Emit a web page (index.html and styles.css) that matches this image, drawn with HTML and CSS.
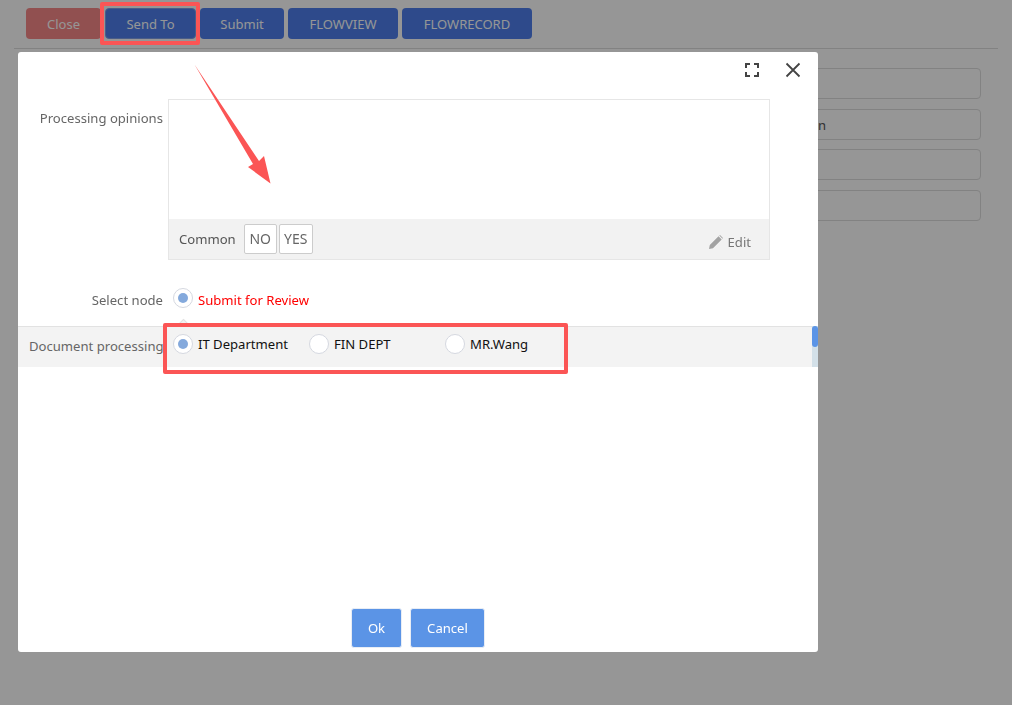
FILE: index.html
```html
<!DOCTYPE html>
<html lang="en">

<head>
    <meta charset="UTF-8">
    <title>Send To</title>
    <link rel="stylesheet" href="styles.css">
</head>

<body>
    <div class="page">
        <div class="toolbar">
            <button class="btn btn-close">Close</button>
            <button class="btn btn-send">Send To</button>
            <button class="btn btn-submit">Submit</button>
            <button class="btn btn-flowview">FLOWVIEW</button>
            <button class="btn btn-record">FLOWRECORD</button>
        </div>
        <div class="fields">
            <div class="field"></div>
            <div class="field field-text">Administration</div>
            <div class="field"></div>
            <div class="field"></div>
        </div>
    </div>

    <div class="mask"></div>

    <div class="modal">
        <div class="modal-head">
            <svg class="icon-max" width="14" height="14" viewBox="0 0 14 14">
                <path d="M1 5V1h4M9 1h4v4M13 9v4H9M5 13H1V9" fill="none" stroke="#444" stroke-width="2" />
            </svg>
            <svg class="icon-x" width="16" height="16" viewBox="0 0 16 16">
                <path d="M1.500 1.500l13 13M14.500 1.500l-13 13" fill="none" stroke="#444" stroke-width="1.800" />
            </svg>
        </div>

        <div class="opinion-row">
            <div class="row-label">Processing opinions</div>
            <div class="editor">
                <div class="editor-text"></div>
                <div class="editor-bar">
                    <span class="common">Common</span>
                    <span class="tag">NO</span>
                    <span class="tag">YES</span>
                    <span class="edit">
                        <svg width="14" height="14" viewBox="0 0 14 14">
                            <path d="M0 14l.8-4L9.500 1.300l3.200 3.200L4 13.200zM10.300.5l.7-.5 3 3-.5.700z" fill="#a3a3a3" />
                        </svg>
                        Edit
                    </span>
                </div>
            </div>
        </div>

        <div class="node-row">
            <div class="row-label">Select node</div>
            <span class="radio radio-on"></span>
            <span class="node-name">Submit for Review</span>
        </div>

        <div class="people-row">
            <div class="people-label">Document processing</div>
            <div class="people-item people-it"><span class="radio radio-on"></span>IT Department</div>
            <div class="people-item people-fin"><span class="radio"></span>FIN DEPT</div>
            <div class="people-item"><span class="radio"></span>MR.Wang</div>
            <div class="scroll"><div class="scroll-thumb"></div></div>
        </div>

        <div class="modal-body"></div>

        <div class="modal-foot">
            <button class="foot-btn foot-ok">Ok</button>
            <button class="foot-btn foot-cancel">Cancel</button>
        </div>
    </div>

    <!-- red marks drawn on top of the screenshot -->
    <div class="mark mark-send"></div>
    <div class="mark mark-people"></div>
    <svg class="arrow" width="1012" height="705" viewBox="0 0 1012 705">
        <polygon points="194.500,64.500 259,161 264,156 270.500,183.500 248,167 253,164" fill="#fb5555" />
    </svg>
</body>

</html>
```

FILE: styles.css
```css
* {
    box-sizing: border-box;
}

body {
    margin: 0;
    width: 1012px;
    height: 705px;
    overflow: hidden;
    background-color: white;
    font-family: "Noto Sans", "Open Sans", Arial, sans-serif;
    font-size: 13.1px;
    color: #666;
}

.page {
    padding: 8px 14px 0 14px;
}

.toolbar {
    display: flex;
    gap: 4px;
    height: 41px;
    padding-left: 12px;
    border-bottom: 1px solid #ddd;
    padding-bottom: 9px;
}

.btn {
    height: 31px;
    border: none;
    border-radius: 4px;
    color: white;
    font: inherit;
    font-size: 13px;
    padding: 0;
    background-color: #4e7fec;
}

.btn-close {
    width: 75px;
    background-color: #f68888;
}

.btn-send {
    width: 91px;
    border: 1px solid #7f9fe8;
}

.btn-submit {
    width: 84px;
}

.btn-flowview {
    width: 110px;
}

.btn-record {
    width: 130px;
}

.fields {
    display: flex;
    flex-direction: column;
    gap: 9.7px;
    margin: 19px 17px 0 500px;
}

.field {
    height: 31px;
    border: 1px solid #ddd;
    border-radius: 4px;
    line-height: 30px;
}

.field-text {
    color: #555;
    padding-left: 220px;
}

.mask {
    position: fixed;
    left: 0;
    top: 0;
    width: 100%;
    height: 100%;
    background-color: rgba(0, 0, 0, 0.41);
}

.modal {
    position: fixed;
    left: 18px;
    top: 52px;
    width: 800px;
    height: 600px;
    display: flex;
    flex-direction: column;
    background-color: white;
    border-radius: 3px;
    overflow: hidden;
}

.modal-head {
    display: flex;
    justify-content: flex-end;
    align-items: center;
    gap: 26px;
    height: 47px;
    padding: 0 17px 11px 0;
}

.opinion-row {
    display: flex;
    height: 161px;
}

.row-label {
    width: 145px;
    text-align: right;
    flex-shrink: 0;
}

.opinion-row .row-label {
    padding-top: 9px;
    line-height: 20px;
}

.editor {
    display: flex;
    flex-direction: column;
    width: 602px;
    margin-left: 5px;
    border: 1px solid #e6e6e6;
}

.editor-text {
    flex: 1;
}

.editor-bar {
    display: flex;
    align-items: center;
    height: 40px;
    padding: 0 18px 0 10px;
    background-color: #f2f2f2;
    color: #555;
}

.common {
    margin-right: 8px;
}

.tag {
    width: 33px;
    height: 30px;
    margin-right: 2px;
    border: 1px solid #ccc;
    border-radius: 2px;
    background-color: white;
    color: #666;
    font-size: 14px;
    line-height: 28px;
    text-align: center;
}

.tag + .tag {
    width: 34px;
}

.edit {
    display: flex;
    align-items: center;
    gap: 5px;
    margin-left: auto;
    margin-top: 5px;
    color: #777;
}

.node-row {
    display: flex;
    align-items: center;
    height: 29px;
    margin-top: 25px;
}

.radio {
    display: block;
    position: relative;
    width: 20px;
    height: 20px;
    flex-shrink: 0;
    border: 1px solid #d5d8e0;
    border-radius: 50%;
    background-color: white;
}

.radio-on::after {
    content: "";
    position: absolute;
    left: 4px;
    top: 4px;
    width: 10px;
    height: 10px;
    border-radius: 50%;
    background-color: #84a9dc;
}

.node-row .radio {
    margin: -3px 0 0 10px;
}

.node-name {
    margin-left: 5px;
    color: #f00;
}

.people-row {
    position: relative;
    display: flex;
    align-items: center;
    height: 41px;
    margin-top: 12px;
    background-color: #f3f3f3;
    border-top: 1px solid #e2e2e2;
    color: #111;
}

/* little caret under the selected node */
.people-row::before {
    content: "";
    position: absolute;
    left: 160px;
    top: -6px;
    width: 10px;
    height: 10px;
    transform: rotate(45deg);
    background-color: #f3f3f3;
    border-left: 1px solid #e2e2e2;
    border-top: 1px solid #e2e2e2;
}

.people-label {
    width: 155px;
    padding-left: 11px;
    margin-bottom: 2px;
    color: #666;
    flex-shrink: 0;
    white-space: nowrap;
}

.people-item {
    display: flex;
    align-items: center;
    gap: 5px;
    margin-bottom: 6px;
}

.people-it {
    width: 136px;
}

.people-fin {
    width: 136px;
}

.scroll {
    position: absolute;
    right: 0;
    top: -1px;
    bottom: 0;
    width: 6px;
    background-color: #d3e0e8;
}

.scroll-thumb {
    height: 21px;
    border-radius: 3px;
    background-color: #5b94e6;
}

.modal-body {
    flex: 1;
}

.modal-foot {
    display: flex;
    justify-content: center;
    gap: 8px;
    height: 43px;
}

.foot-btn {
    height: 40px;
    margin-top: -1px;
    border: 1px solid #e8edf5;
    border-radius: 3px;
    background-color: #5b94e6;
    color: white;
    font: inherit;
    padding: 0;
}

.foot-ok {
    width: 51px;
}

.foot-cancel {
    width: 75px;
}

.mark {
    position: fixed;
    border: 4px solid #fb5555;
    border-radius: 2px;
}

.mark-send {
    left: 100px;
    top: 2px;
    width: 100px;
    height: 43px;
}

.mark-people {
    left: 163px;
    top: 323px;
    width: 405px;
    height: 51px;
}

.arrow {
    position: fixed;
    left: 0;
    top: 0;
}
```
